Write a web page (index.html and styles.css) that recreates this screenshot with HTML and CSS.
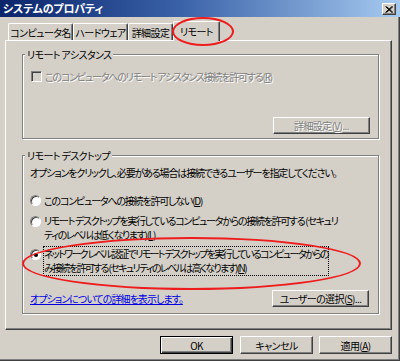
FILE: index.html
```html
<!DOCTYPE html>
<html lang="ja">

<head>
  <meta charset="UTF-8">
  <title>システムのプロパティ</title>
  <link rel="stylesheet" href="styles.css">
</head>

<body>
  <div class="window">

    <div class="titlebar">
      <span class="title">システムのプロパティ</span>
      <span class="close">
        <svg width="8" height="7" viewBox="0 0 8 7">
          <path d="M0.5 0.5L7 6.5M1.5 0.5L8 6.5M7 0.5L0.5 6.5M8 0.5L1.5 6.5" stroke="#000" stroke-width="1" />
        </svg>
      </span>
    </div>

    <div class="tabs">
      <div class="tab tab-name">コンピュータ名</div>
      <div class="tab tab-hw">ハードウェア</div>
      <div class="tab tab-adv">詳細設定</div>
      <div class="tab tab-remote active">リモート</div>
    </div>

    <div class="panel">

      <fieldset class="group group-assist">
        <legend class="disabled">リモート アシスタンス</legend>
        <div class="check disabled">
          <span class="box"></span>
          <span class="text-assist">このコンピュータへのリモート アシスタンス接続を許可する(<u>R</u>)</span>
        </div>
        <div class="row-end">
          <button class="btn btn-small" disabled><span>詳細設定(<u>V</u>)...</span></button>
        </div>
      </fieldset>

      <fieldset class="group group-desk">
        <legend>リモート デスクトップ</legend>
        <p class="note">オプションをクリックし、必要がある場合は接続できるユーザーを指定してください。</p>

        <div class="radio radio-first">
          <span class="dot"></span>
          <span class="text-deny">このコンピュータへの接続を許可しない(<u>D</u>)</span>
        </div>
        <div class="radio radio-second">
          <span class="dot"></span>
          <span class="text-wrap text-allow">リモート デスクトップを実行しているコンピュータからの接続を許可する (セキュリ<br>ティのレベルは低くなります)(<u>L</u>)</span>
        </div>
        <div class="radio radio-third">
          <span class="dot checked"></span>
          <span class="text-wrap text-nla focus">ネットワーク レベル認証でリモート デスクトップを実行しているコンピュータからの<br>み接続を許可する (セキュリティのレベルは高くなります)(<u>N</u>)</span>
        </div>

        <div class="row-between">
          <a class="link" href="#">オプションについての詳細を表示します。</a>
          <button class="btn btn-small"><span>ユーザーの選択(<u>S</u>)...</span></button>
        </div>
      </fieldset>

    </div>

    <div class="actions">
      <button class="btn btn-default"><span>OK</span></button>
      <button class="btn"><span>キャンセル</span></button>
      <button class="btn"><span>適用(<u>A</u>)</span></button>
    </div>

    <!-- red annotation marks -->
    <span class="mark mark-tab"></span>
    <span class="mark mark-option"></span>
  </div>
</body>

</html>
```

FILE: styles.css
```css
* {
  box-sizing: border-box;
}

body {
  margin: 0;
  font-family: "Noto Sans CJK JP", "Noto Sans", sans-serif;
  font-size: 10px;
  line-height: 13px;
  letter-spacing: -0.6px;
  font-feature-settings: "palt";
  color: #000;
  background: #d4d0c8;
}

u {
  text-decoration-thickness: 1px;
  text-underline-offset: 1px;
}

.window {
  position: relative;
  width: 400px;
  height: 361px;
  overflow: hidden;
  background: #d4d0c8;
  box-shadow: inset -1px -1px #404040, inset -2px -2px #808080, inset -3px -3px #d4d0c8;
}

/* title bar */

.titlebar {
  display: flex;
  justify-content: space-between;
  align-items: center;
  height: 17px;
  padding: 0 4px 0 3px;
  background: linear-gradient(to right, #0a246a 0%, #3a62a8 45%, #a6caf0 100%);
}

.title {
  color: #fff;
  font-size: 11px;
  font-weight: 700;
  letter-spacing: -0.2px;
}

.close {
  display: flex;
  justify-content: center;
  align-items: center;
  width: 14px;
  height: 12px;
  margin-top: 1px;
  background: #d4d0c8;
  border: 1px solid;
  border-color: #fff #404040 #404040 #fff;
  box-shadow: inset -1px -1px #808080;
}

/* tabs */

.tabs {
  display: flex;
  align-items: flex-end;
  height: 23px;
  margin: 0 0 0 8px;
  position: relative;
  z-index: 1;
}

.tab {
  height: 17px;
  padding-top: 2px;
  text-align: center;
  white-space: nowrap;
  background: #d4d0c8;
  border-top: 1px solid #fff;
  border-left: 1px solid #fff;
  border-right: 1px solid #404040;
  border-radius: 2px 2px 0 0;
  box-shadow: inset -1px 0 #808080;
}

.tab-name {
  width: 65px;
}

.tab-hw {
  width: 55px;
}

.tab-adv {
  width: 45px;
}

.tab-remote {
  width: 47px;
}

.tab.active {
  height: 20px;
  margin-bottom: -1px;
  padding-top: 3px;
}

/* property sheet */

.panel {
  width: 387px;
  height: 290px;
  margin-left: 5px;
  padding-left: 16px;
  border: 1px solid;
  border-color: #fff #404040 #404040 #fff;
  box-shadow: inset -1px -1px #808080;
}

.group {
  width: 357px;
  margin: 7px 0 0;
  padding: 0 7px;
  border: 1px solid #808080;
  box-shadow: inset 1px 1px #fff, 1px 1px #fff;
  min-inline-size: 0;
}

.group legend {
  margin-left: -5px;
  padding: 0 2px;
  background: #d4d0c8;
}

.group-assist {
  padding-top: 9px;
  padding-bottom: 4px;
}

.group-desk {
  margin-top: 10px;
  padding-top: 4px;
  padding-bottom: 6px;
}

.disabled {
  color: #808080;
  text-shadow: 1px 1px #fff;
}

.group legend.disabled {
  color: #000;
  text-shadow: none;
}

.check,
.radio {
  display: flex;
  align-items: flex-start;
  white-space: nowrap;
}

.text-assist {
  letter-spacing: -1.2px;
}

.text-deny {
  letter-spacing: -1.2px;
}

.text-wrap {
  line-height: 14px;
}

.text-allow {
  letter-spacing: -1.3px;
}

.text-nla {
  letter-spacing: -1.65px;
}

.box {
  flex: none;
  width: 11px;
  height: 11px;
  margin: 1px 3px 0 1px;
  background: #d4d0c8;
  border: 1px solid;
  border-color: #808080 #fff #fff #808080;
  box-shadow: inset 1px 1px #404040;
}

.row-end {
  display: flex;
  justify-content: flex-end;
  margin-top: 34px;
  padding-right: 1px;
}

.row-between {
  display: flex;
  justify-content: space-between;
  align-items: center;
  margin-top: 14px;
  padding-right: 2px;
}

.note {
  margin: 0;
  white-space: nowrap;
  letter-spacing: -1.15px;
}

.radio-first {
  margin-top: 15px;
}

.radio-second {
  margin-top: 7px;
}

.radio-third {
  margin-top: 5px;
}

.dot {
  flex: none;
  position: relative;
  width: 11px;
  height: 11px;
  margin: 1px 3px 0 0;
  border-radius: 50%;
  background: #fff;
  border: 1px solid;
  border-color: #808080 #fff #fff #808080;
  box-shadow: inset 1px 1px #404040, 0 0 0 0.5px #d4d0c8;
}

.radio-second .dot,
.radio-third .dot {
  margin-top: 2px;
}

.dot.checked::after {
  content: "";
  position: absolute;
  top: 3px;
  left: 3px;
  width: 4px;
  height: 4px;
  border-radius: 50%;
  background: #000;
}

.focus {
  margin: -1px 0 0 -1px;
  border: 1px dotted #000;
}

.link {
  color: #0000e0;
  letter-spacing: -0.95px;
  text-decoration: underline;
  text-decoration-thickness: 1px;
  text-underline-offset: 1px;
}

/* buttons */

.btn {
  display: flex;
  justify-content: center;
  align-items: center;
  width: 73px;
  height: 18px;
  padding: 0;
  font: inherit;
  letter-spacing: inherit;
  color: #000;
  white-space: nowrap;
  background: #d4d0c8;
  border: 1px solid;
  border-color: #fff #404040 #404040 #fff;
  box-shadow: inset -1px -1px #808080;
}

.btn-small {
  width: 97px;
  height: 17px;
}

.btn:disabled {
  color: #808080;
  text-shadow: 1px 1px #fff;
}

.btn-default {
  border: 1px solid #000;
  box-shadow: inset 1px 1px #fff, inset -1px -1px #404040, inset -2px -2px #808080;
}

.actions {
  display: flex;
  justify-content: flex-end;
  gap: 6px;
  margin: 6px 8px 0 0;
}

.actions .btn-default {
  margin-right: 1px;
}

/* annotation marks */

.mark {
  position: absolute;
  border: 2px solid #ee1c1c;
  border-radius: 50%;
  z-index: 2;
}

.mark-tab {
  left: 172px;
  top: 17px;
  width: 62px;
  height: 29px;
}

.mark-option {
  left: 22px;
  top: 237px;
  width: 339px;
  height: 53px;
}
```
